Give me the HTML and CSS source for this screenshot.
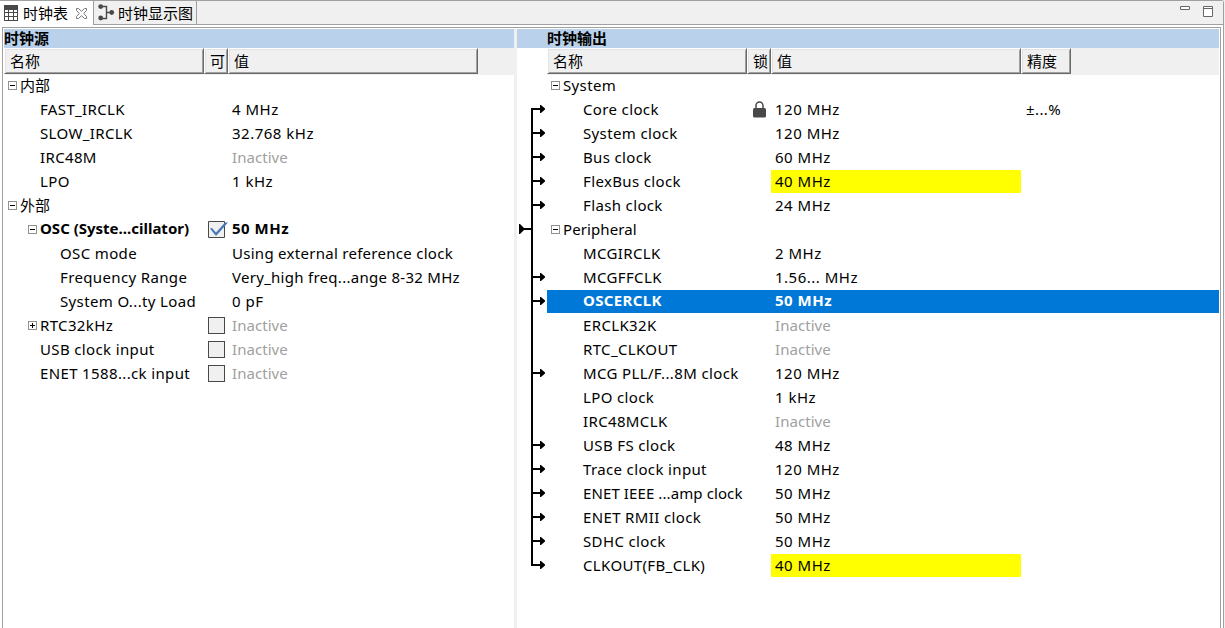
FILE: index.html
```html
<!DOCTYPE html>
<html lang="zh-CN">
<head>
<meta charset="utf-8">
<title>时钟表</title>
<link rel="stylesheet" href="styles.css">
</head>
<body>
<div class="folder">
  <div class="tabs">
    <div class="tab active">
      <svg class="ic-table" width="14" height="16" viewBox="0 0 14 16"><path fill="#484848" d="M0 0h14v16H0z"/><path fill="#fff" d="M1 5h3v2H1zM5 5h4v2H5zM10 5h3v2h-3zM1 8h3v3H1zM5 8h4v3H5zM10 8h3v3h-3zM1 12h3v3H1zM5 12h4v3H5zM10 12h3v3h-3z"/></svg>
      <span>时钟表</span>
      <svg class="ic-close" width="11" height="11" viewBox="0 0 11 11"><path fill="#fff" stroke="#777" stroke-width="1" d="M.5.5h2l3 2.800 3-2.800h2v2L7.700 5.500l2.800 3v2h-2l-3-2.800-3 2.800h-2v-2l2.800-3-2.800-3z"/></svg>
    </div>
    <div class="tab">
      <svg class="ic-tree" width="17" height="17" viewBox="0 0 17 17"><path fill="none" stroke="#484848" stroke-width="1.400" d="M3 2.500h5.500v12H3M8.500 8.500H14"/><g fill="#484848"><circle cx="2.700" cy="2.600" r="2.400"/><circle cx="2.700" cy="14" r="2.400"/><circle cx="13.700" cy="8.500" r="2.400"/></g></svg>
      <span>时钟显示图</span>
    </div>
    <div class="controls">
      <svg width="33" height="12" viewBox="0 0 33 12"><g fill="#fff" stroke="#666"><path d="M.5.5h9v3h-9zM23.500.5h9v10h-9zM23.500 2.500h9"/></g></svg>
    </div>
  </div>
  <div class="content">
    <section class="panel sources">
      <h2>时钟源</h2>
      <div class="head"><span class="c-name">名称</span><span class="c-flag">可</span><span class="c-val">值</span></div>
      <div class="row"><div class="name"><i class="box"></i><b>内部</b></div></div>
      <div class="row"><div class="name l1">FAST_IRCLK</div><div class="flag"></div><div class="val">4 MHz</div></div>
      <div class="row"><div class="name l1">SLOW_IRCLK</div><div class="flag"></div><div class="val">32.768 kHz</div></div>
      <div class="row"><div class="name l1">IRC48M</div><div class="flag"></div><div class="val off">Inactive</div></div>
      <div class="row"><div class="name l1">LPO</div><div class="flag"></div><div class="val">1 kHz</div></div>
      <div class="row"><div class="name"><i class="box"></i><b>外部</b></div></div>
      <div class="row strong"><div class="name sub tight"><i class="box"></i>OSC (Syste...cillator)</div><div class="flag"><svg class="check" width="20" height="17" viewBox="0 0 20 17"><path fill="#f0f0f0" stroke="#484848" d="M.5.5h16v16H.5z"/><path fill="#4a78b5" d="M2 7.500l2-.5 4 4.500L17 1.500h3L8.500 14.500 7.500 14.500z"/></svg></div><div class="val">50 MHz</div></div>
      <div class="row"><div class="name l2">OSC mode</div><div class="flag"></div><div class="val long">Using external reference clock</div></div>
      <div class="row"><div class="name l2">Frequency Range</div><div class="flag"></div><div class="val long">Very_high freq...ange 8-32 MHz</div></div>
      <div class="row"><div class="name l2">System O...ty Load</div><div class="flag"></div><div class="val">0 pF</div></div>
      <div class="row"><div class="name sub"><i class="box plus"></i>RTC32kHz</div><div class="flag"><i class="cb"></i></div><div class="val off">Inactive</div></div>
      <div class="row"><div class="name l1">USB clock input</div><div class="flag"><i class="cb"></i></div><div class="val off">Inactive</div></div>
      <div class="row"><div class="name l1">ENET 1588...ck input</div><div class="flag"><i class="cb"></i></div><div class="val off">Inactive</div></div>
    </section>
    <div class="sash"></div>
    <section class="panel outputs">
      <h2>时钟输出</h2>
      <div class="split">
        <div class="gutter">
          <svg width="30" height="530" viewBox="517 48 30 530">
            <defs><g id="a"><path d="M531 0h10v2h-10z"/><path d="M540-3h1l4 3.500v1l-4 3.500h-1z"/></g></defs>
            <path d="M531 108h2v458h-2zM519 228h13v2h-13zM519 224h1l4 4v2l-4 4h-1z"/>
            <use href="#a" y="108"/><use href="#a" y="132"/><use href="#a" y="156"/><use href="#a" y="180"/><use href="#a" y="204"/><use href="#a" y="276"/><use href="#a" y="300"/><use href="#a" y="372"/><use href="#a" y="444"/><use href="#a" y="468"/><use href="#a" y="492"/><use href="#a" y="516"/><use href="#a" y="540"/><use href="#a" y="564"/>
          </svg>
        </div>
        <div class="table">
          <div class="head"><span class="c-name">名称</span><span class="c-flag">锁</span><span class="c-val">值</span><span class="c-acc">精度</span></div>
          <div class="row"><div class="name"><i class="box"></i>System</div></div>
          <div class="row"><div class="name l1">Core clock</div><div class="flag"><svg class="lock" width="13" height="17" viewBox="0 0 13 17"><path fill="none" stroke="#484848" stroke-width="1.500" d="M3 8V4.500a3.500 3.500 0 0 1 7 0V8"/><rect x="0" y="7" width="13" height="9.500" rx="1.500" fill="#484848"/></svg></div><div class="val">120 MHz</div><div class="acc">±...%</div></div>
          <div class="row"><div class="name l1">System clock</div><div class="flag"></div><div class="val">120 MHz</div></div>
          <div class="row"><div class="name l1">Bus clock</div><div class="flag"></div><div class="val">60 MHz</div></div>
          <div class="row"><div class="name l1">FlexBus clock</div><div class="flag"></div><div class="val warn">40 MHz</div></div>
          <div class="row"><div class="name l1">Flash clock</div><div class="flag"></div><div class="val">24 MHz</div></div>
          <div class="row"><div class="name snug"><i class="box"></i>Peripheral</div></div>
          <div class="row"><div class="name l1">MCGIRCLK</div><div class="flag"></div><div class="val">2 MHz</div></div>
          <div class="row"><div class="name l1">MCGFFCLK</div><div class="flag"></div><div class="val">1.56... MHz</div></div>
          <div class="row strong selected"><div class="name l1">OSCERCLK</div><div class="flag"></div><div class="val">50 MHz</div></div>
          <div class="row"><div class="name l1">ERCLK32K</div><div class="flag"></div><div class="val off">Inactive</div></div>
          <div class="row"><div class="name l1">RTC_CLKOUT</div><div class="flag"></div><div class="val off">Inactive</div></div>
          <div class="row"><div class="name l1">MCG PLL/F...8M clock</div><div class="flag"></div><div class="val">120 MHz</div></div>
          <div class="row"><div class="name l1">LPO clock</div><div class="flag"></div><div class="val">1 kHz</div></div>
          <div class="row"><div class="name l1">IRC48MCLK</div><div class="flag"></div><div class="val off">Inactive</div></div>
          <div class="row"><div class="name l1">USB FS clock</div><div class="flag"></div><div class="val">48 MHz</div></div>
          <div class="row"><div class="name l1">Trace clock input</div><div class="flag"></div><div class="val">120 MHz</div></div>
          <div class="row"><div class="name l1 snug">ENET IEEE ...amp clock</div><div class="flag"></div><div class="val">50 MHz</div></div>
          <div class="row"><div class="name l1">ENET RMII clock</div><div class="flag"></div><div class="val">50 MHz</div></div>
          <div class="row"><div class="name l1">SDHC clock</div><div class="flag"></div><div class="val">50 MHz</div></div>
          <div class="row"><div class="name l1">CLKOUT(FB_CLK)</div><div class="flag"></div><div class="val warn">40 MHz</div></div>
        </div>
      </div>
    </section>
  </div>
</div>
</body>
</html>
```
FILE: styles.css
```css
* { box-sizing: border-box; }
body {
  margin: 0;
  height: 628px;
  overflow: hidden;
  background: #f0f0f0;
  color: #000;
  font: 15px/24px "Noto Sans", "Noto Sans CJK SC", sans-serif;
}
svg { display: block; flex: none; }

.folder {
  width: 1224px;
  height: 628px;
  border-top: 1px solid #a0a0a0;
  border-right: 1px solid #a0a0a0;
  border-top-right-radius: 3px;
  background: #fff;
}
.tabs {
  display: flex;
  height: 24px;
  background: #f0f0f0;
  border-bottom: 1px solid #a0a0a0;
}
.tab {
  display: flex;
  align-items: center;
  width: 103px;
  height: 23px;
  padding-left: 4px;
  border-right: 1px solid #a0a0a0;
  font-family: "Noto Sans CJK SC", sans-serif;
  white-space: nowrap;
}
.tab.active { width: 94px; height: 24px; background: #fff; }
.ic-table { margin-right: 5px; }
.ic-close { margin-left: 8px; }
.ic-tree { margin-right: 3px; }
.controls { margin-left: auto; padding: 5px 10px 0 0; }

.content {
  display: flex;
  width: 1219px;
  height: 602px;
  margin: 2px 0 0 2px;
  padding: 1px 1px 0 1px;
  border: 1px solid #a0a0a0;
  border-bottom: 0;
}
.panel { background: #fff; }
.sources { width: 510px; }
.outputs { width: 702px; }
.sash { width: 3px; background: #f0f0f0; }
.split { display: flex; }
.gutter { width: 30px; }
.table { width: 672px; }

h2 {
  height: 19px;
  margin: 0;
  background: #b9d1ea;
  font: bold 15px/17px "Noto Sans CJK SC", sans-serif;
}
.outputs h2 { padding-left: 30px; }

.head {
  display: flex;
  height: 27px;
  margin-bottom: -1px;
  background: #f0f0f0;
  font-family: "Noto Sans CJK SC", sans-serif;
}
.head span {
  height: 26px;
  padding-left: 5px;
  border: 1px solid;
  border-color: #fff #696969 #696969 #fff;
  box-shadow: inset 1px 1px #e3e3e3, inset -1px -1px #a0a0a0;
  overflow: hidden;
  line-height: 23px;
}
.c-name, .name { width: 200px; }
.c-flag, .flag { width: 24px; }
.c-val { width: 250px; }
.c-acc { width: 50px; }

.row { display: flex; height: 24px; line-height: 22px; white-space: nowrap; }
.name { display: flex; padding-left: 4px; letter-spacing: .36px; }
.name b { font-weight: normal; font-family: "Noto Sans CJK SC", sans-serif; letter-spacing: 0; }
.name.l1 { padding-left: 36px; }
.name.sub { padding-left: 24px; }
.name.l2 { padding-left: 56px; }
.name.snug { letter-spacing: .1px; }
.name.tight { letter-spacing: 0; }
.flag { padding-top: 3px; }
.val { width: 250px; padding-left: 4px; letter-spacing: .5px; }
.val.long { letter-spacing: .28px; }
.acc { padding-left: 5px; letter-spacing: .4px; }
.val.off { color: #a0a0a0; letter-spacing: .05px; }
.warn { height: 23px; background: #ff0; }
.strong { font-weight: bold; line-height: 20px; }
.selected { height: 23px; margin-bottom: 1px; background: #0078d7; color: #fff; }

.box {
  width: 9px;
  height: 9px;
  margin: 7px 3px 0 0;
  border: 1px solid #919191;
  background: linear-gradient(#000, #000) center / 5px 1px no-repeat;
}
.box.plus {
  background: linear-gradient(#000, #000) center / 5px 1px no-repeat, linear-gradient(#000, #000) center / 1px 5px no-repeat;
}
.cb {
  display: block;
  width: 17px;
  height: 17px;
  margin-left: 4px;
  border: 1px solid #484848;
  background: #f0f0f0;
}
.check { margin-left: 4px; }
.lock { margin: 0 0 0 6px; }
```
